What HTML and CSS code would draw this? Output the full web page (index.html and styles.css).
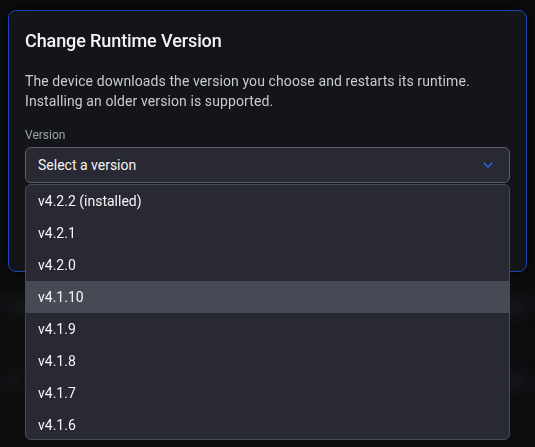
FILE: index.html
```html
<!DOCTYPE html>
<html>
<head>
  <meta charset="UTF-8">
  <title>Change Runtime Version</title>
  <link rel="stylesheet" href="styles.css">
</head>
<body>
<div class="backdrop">
  <div class="ghost-row"><span class="ghost w1"></span><span class="ghost w2"></span></div>
  <div class="ghost-row"><span class="ghost w3"></span><span class="ghost w1"></span></div>
</div>

<div class="dialog">
  <h1>Change Runtime Version</h1>
  <p class="desc">The device downloads the version you choose and restarts its runtime. Installing an older version is supported.</p>

  <label class="field-label">Version</label>
  <div class="select-wrap">
    <div class="select">
      <span>Select a version</span>
      <svg class="chevron" width="10" height="6" viewBox="0 0 10 6">
        <path d="M1 1l4 4 4-4" fill="none" stroke="#2f6bf0" stroke-width="1.4" stroke-linecap="round" stroke-linejoin="round"/>
      </svg>
    </div>

    <ul class="options">
      <li>v4.2.2 (installed)</li>
      <li>v4.2.1</li>
      <li>v4.2.0</li>
      <li class="active">v4.1.10</li>
      <li>v4.1.9</li>
      <li>v4.1.8</li>
      <li>v4.1.7</li>
      <li>v4.1.6</li>
    </ul>
  </div>

  <div class="actions">
    <button class="btn">Cancel</button>
    <button class="btn primary">Install</button>
  </div>
</div>
</body>
</html>
```

FILE: styles.css
```css
html {
  height: 100%;
}

body {
  box-sizing: border-box;
  min-height: 100%;
  margin: 0;
  padding: 10px 8px;
  background-color: #0c0d0f;
  font-family: Roboto, "Noto Sans", sans-serif;
  color: #f3f4f6;
}

/* blurred page content behind the dialog */
.backdrop {
  position: fixed;
  left: 0;
  right: 0;
  top: 300px;
  display: flex;
  flex-direction: column;
  gap: 60px;
  filter: blur(8px);
  opacity: 0.25;
}

.ghost-row {
  display: flex;
  justify-content: space-between;
  padding: 0 4px;
}

.ghost {
  height: 14px;
  background-color: #3a3c42;
  border-radius: 4px;
}

.w1 { width: 30px; }
.w2 { width: 50px; }
.w3 { width: 20px; }

.dialog {
  position: relative;
  padding: 16px;
  background-color: #141518;
  border: 1px solid #1d45b0;
  border-radius: 8px;
  box-shadow: 0 0 18px rgba(0, 0, 0, 0.9);
}

h1 {
  margin: 0;
  font-size: 18px;
  line-height: 28px;
  font-weight: 500;
  letter-spacing: -0.1px;
  color: #f3f4f6;
}

.desc {
  margin: 16px 0 0;
  font-size: 14px;
  line-height: 20px;
  letter-spacing: 0.1px;
  color: #c8cbd2;
}

.field-label {
  display: block;
  margin-top: 16px;
  font-size: 12px;
  line-height: 16px;
  color: #9ca0aa;
}

.select-wrap {
  position: relative;
  margin-top: 4px;
}

.select {
  display: flex;
  align-items: center;
  justify-content: space-between;
  height: 34px;
  padding: 0 16px 0 12px;
  background-color: #282932;
  border: 1px solid #5c5f6d;
  border-radius: 6px;
  font-size: 14px;
  color: #f5f5f7;
}

.chevron {
  display: block;
}

.options {
  position: absolute;
  left: 0;
  right: 0;
  top: calc(100% + 1px);
  z-index: 2;
  margin: 0;
  padding: 0;
  list-style-type: none;
  max-height: 254px;
  overflow: hidden;
  background-color: #282932;
  border: 1px solid #474a57;
  border-radius: 6px;
}

.options li {
  height: 32px;
  line-height: 32px;
  padding: 0 12px;
  font-size: 14px;
  color: #f5f5f7;
}

.options li.active {
  background-color: #464a55;
}

.actions {
  display: flex;
  justify-content: flex-end;
  gap: 8px;
  margin-top: 36px;
}

.btn {
  height: 36px;
  padding: 0 14px;
  border: 1px solid #3a3d46;
  border-radius: 6px;
  background-color: #22242a;
  color: #e5e7eb;
  font-family: inherit;
  font-size: 14px;
}

.btn.primary {
  background-color: #2563eb;
  border-color: #2563eb;
  color: #fff;
}
```
